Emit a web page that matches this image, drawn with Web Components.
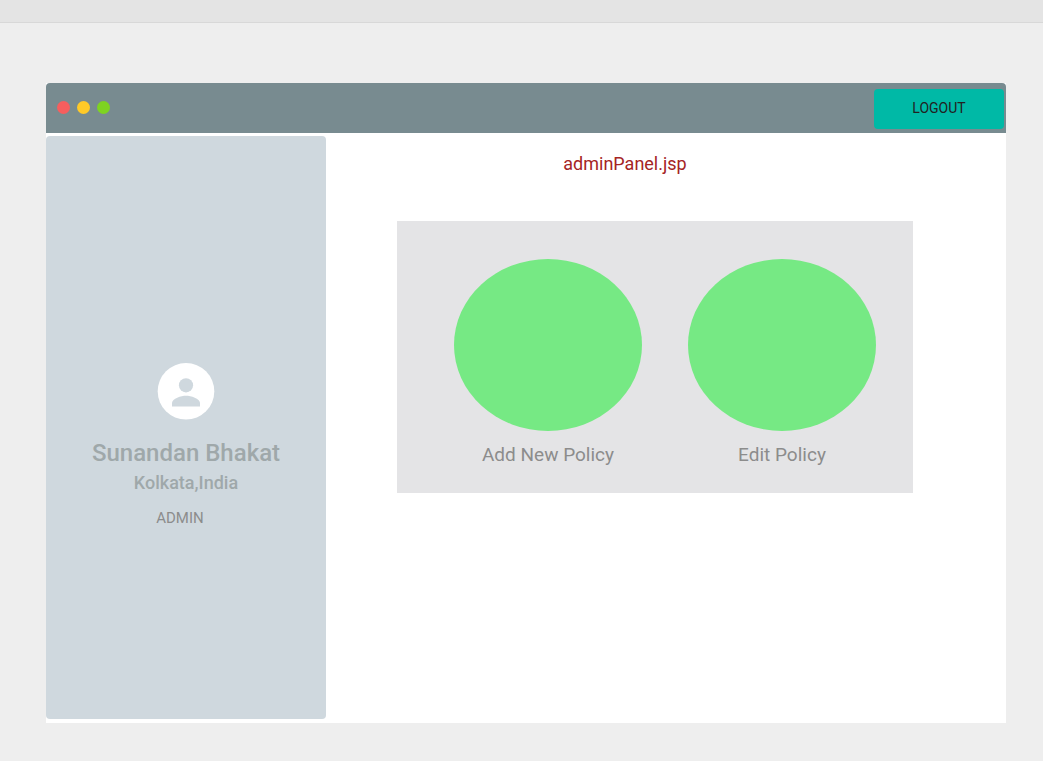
<!DOCTYPE html>
<html lang="en">
<head>
<meta charset="utf-8">
<title>adminPanel.jsp</title>
<style>
  body { margin: 0; background: #eeeeee; font-family: Roboto, "Liberation Sans", sans-serif; color: #8c8c8c; }
</style>
</head>
<body>
<admin-page>
  <app-window>
    <title-bar slot="bar"></title-bar>
    <user-profile slot="side">
      <span slot="name">Sunandan Bhakat</span>
      <span slot="place">Kolkata,India</span>
      <span slot="role">ADMIN</span>
    </user-profile>
    <policy-panel>
      <span slot="heading">adminPanel.jsp</span>
      <policy-action>Add New Policy</policy-action>
      <policy-action>Edit Policy</policy-action>
    </policy-panel>
  </app-window>
</admin-page>

<script>
const define = (name, markup) => {
  const template = document.createElement('template');
  template.innerHTML = markup;
  customElements.define(name, class extends HTMLElement {
    constructor() {
      super();
      this.attachShadow({ mode: 'open' }).append(template.content.cloneNode(true));
    }
  });
};

define('admin-page', `
  <style>
    :host { display: flex; flex-direction: column; min-height: 100vh; }
    .strip { height: 22px; background: #e4e4e4; border-bottom: 1px solid #d8d8d8; }
    main { flex: 1; display: flex; padding: 60px 37px 38px 46px; }
  </style>
  <div class="strip"></div>
  <main><slot></slot></main>`);

define('app-window', `
  <style>
    :host { flex: 1; display: flex; flex-direction: column; background: #fff; }
    .content { flex: 1; display: grid; grid-template-columns: 280px 1fr; padding: 3px 0 4px; }
  </style>
  <slot name="bar"></slot>
  <div class="content"><slot name="side"></slot><slot></slot></div>`);

define('title-bar', `
  <style>
    :host { display: flex; align-items: center; justify-content: space-between; height: 50px;
      box-sizing: border-box; padding: 6px 2px 4px 11px; background: #788b90; border-radius: 4px 4px 0 0; }
    .lights { display: flex; gap: 7px; padding-bottom: 3px; }
    .lights i { width: 13px; height: 13px; border-radius: 50%; }
    .red { background: #f65e5e; }
    .yellow { background: #ffca28; }
    .green { background: #7ed321; }
    button { width: 130px; height: 40px; padding: 0 0 2px; border: 0; border-radius: 4px;
      background: #00b9a6; color: #212121; font: 14px/20px Roboto, sans-serif; }
  </style>
  <div class="lights"><i class="red"></i><i class="yellow"></i><i class="green"></i></div>
  <button type="button">LOGOUT</button>`);

define('user-profile', `
  <style>
    :host { display: flex; flex-direction: column; align-items: center; justify-content: center;
      box-sizing: border-box; padding-top: 35px; background: #cfd8de; border-radius: 4px; color: #9fa8aa; font-weight: 500; }
    svg { width: 58px; height: 58px; display: block; margin-bottom: 16px; }
    .name { font-size: 24px; line-height: 34px; }
    .place { font-size: 18px; line-height: 26px; }
    .role { font-size: 15px; line-height: 20px; font-weight: 400; color: #8c8c8c; margin-top: 12px; padding-right: 12px; }
  </style>
  <svg viewBox="0 0 58 58" aria-hidden="true">
    <circle cx="29" cy="29.300" r="28.300" fill="#fff"/>
    <circle cx="29" cy="23.300" r="7.100" fill="#cfd8de"/>
    <path d="M15 44.500v-3.500c0-4.700 9.300-7.300 14-7.300s14 2.600 14 7.300v3.500z" fill="#cfd8de"/>
  </svg>
  <div class="name"><slot name="name"></slot></div>
  <div class="place"><slot name="place"></slot></div>
  <div class="role"><slot name="role"></slot></div>`);

define('policy-panel', `
  <style>
    :host { display: block; padding: 12px 93px 0 71px; }
    h1 { margin: 0 60px 41px 0; text-align: center; font-size: 18px; line-height: 32px; font-weight: 400; color: #a52424; }
    .card { display: grid; grid-template-columns: 1fr 1fr; gap: 46px; padding: 38px 37px 24px 57px; background: #e4e4e6; }
  </style>
  <h1><slot name="heading"></slot></h1>
  <div class="card"><slot></slot></div>`);

define('policy-action', `
  <style>
    :host { display: block; text-align: center; font-size: 19px; line-height: 28px; }
    .disc { aspect-ratio: 188 / 172; margin-bottom: 10px; border-radius: 50%; background: #76e984; }
  </style>
  <div class="disc"></div>
  <slot></slot>`);
</script>
</body>
</html>
